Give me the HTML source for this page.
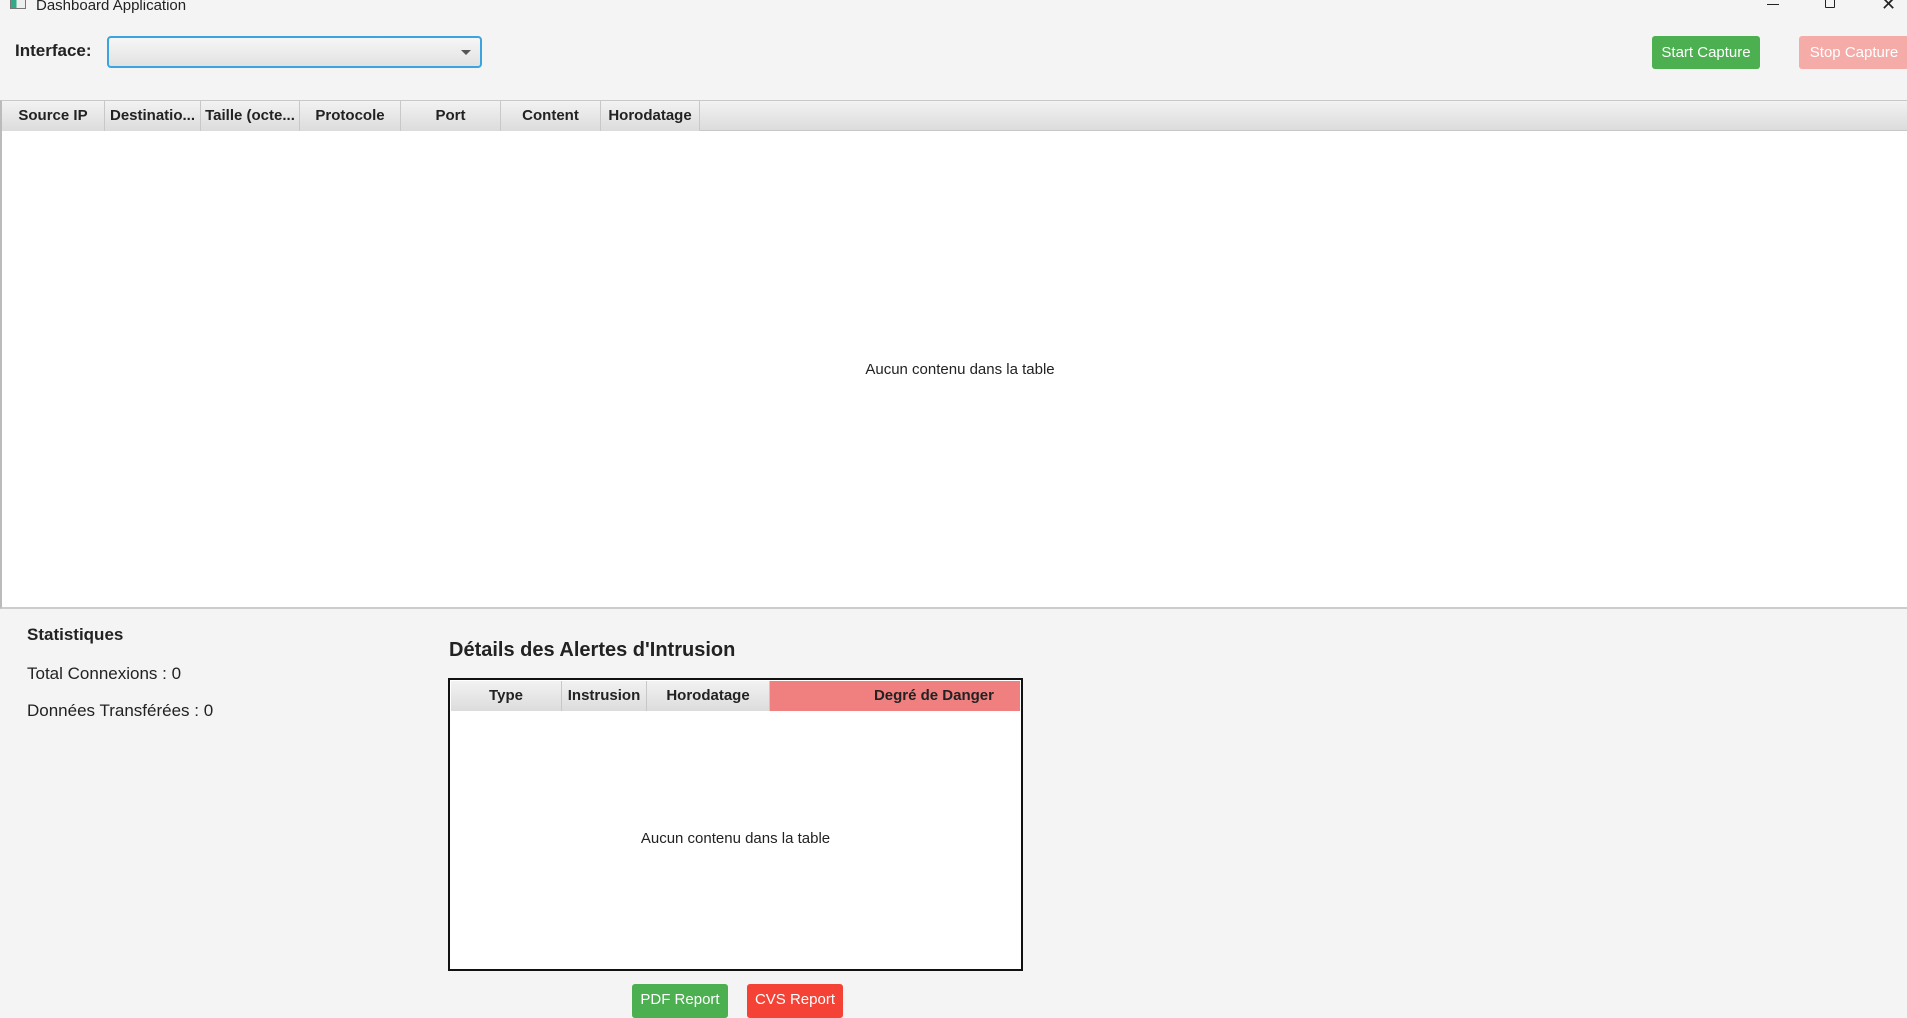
<!DOCTYPE html>
<html><head><meta charset="utf-8"><style>
*{margin:0;padding:0;box-sizing:border-box}
body{width:1907px;height:1012px;background:#f4f4f4;font-family:"Liberation Sans",sans-serif;position:relative;overflow:hidden;color:#222}
.a{position:absolute;white-space:nowrap}
.hdr{background:linear-gradient(#f2f2f2,#dcdcdc);border-right:1px solid #c8c8c8;font-weight:bold;font-size:15px;text-align:center;line-height:29px;color:#222}
.btn{color:#fff;font-size:15px;text-align:center;border-radius:3px}
</style></head><body>
<div class="a" style="left:10px;top:-4px;width:16px;height:13px;border:1px solid #777;background:linear-gradient(90deg,#3a8 40%,#eee 40%)"></div>
<div class="a" style="left:36px;top:-3px;font-size:15px;color:#222">Dashboard Application</div>
<div class="a" style="left:1767px;top:4px;width:12px;height:1px;background:#222"></div>
<div class="a" style="left:1825px;top:-4px;width:10px;height:12px;border:1px solid #222;border-radius:1px"></div>
<div class="a" style="left:1881px;top:-6px;font-size:18px;color:#222">✕</div>
<div class="a" style="left:15px;top:41px;font-size:17px;font-weight:bold">Interface:</div>
<div class="a" style="left:107px;top:36px;width:375px;height:32px;border:2px solid #3ba3e0;border-radius:4px;background:linear-gradient(#f6f6f6,#e2e2e2)"></div>
<div class="a" style="left:461px;top:50px;width:0;height:0;border-left:5px solid transparent;border-right:5px solid transparent;border-top:5px solid #555"></div>
<div class="a btn" style="left:1652px;top:36px;width:108px;height:33px;line-height:33px;background:#4caf50">Start Capture</div>
<div class="a btn" style="left:1799px;top:36px;width:110px;height:33px;line-height:33px;background:#f5aca9">Stop Capture</div>
<div class="a" style="left:0;top:100px;width:1907px;height:509px;background:#fff;border-top:1px solid #c8c8c8;border-left:2px solid #bbb;border-bottom:2px solid #ccc"></div>
<div class="a" style="left:2px;top:101px;width:1905px;height:30px;background:linear-gradient(#f2f2f2,#dcdcdc);border-bottom:1px solid #c8c8c8"></div>
<div class="a hdr" style="left:2px;top:101px;width:103px;height:30px">Source IP</div>
<div class="a hdr" style="left:105px;top:101px;width:96px;height:30px">Destinatio...</div>
<div class="a hdr" style="left:201px;top:101px;width:99px;height:30px">Taille (octe...</div>
<div class="a hdr" style="left:300px;top:101px;width:101px;height:30px">Protocole</div>
<div class="a hdr" style="left:401px;top:101px;width:100px;height:30px">Port</div>
<div class="a hdr" style="left:501px;top:101px;width:100px;height:30px">Content</div>
<div class="a hdr" style="left:601px;top:101px;width:99px;height:30px">Horodatage</div>
<div class="a" style="left:0;top:361px;width:1920px;text-align:center;font-size:15px">Aucun contenu dans la table</div>
<div class="a" style="left:27px;top:625px;font-size:17px;font-weight:bold">Statistiques</div>
<div class="a" style="left:27px;top:664px;font-size:17px">Total Connexions : 0</div>
<div class="a" style="left:27px;top:701px;font-size:17px">Données Transférées : 0</div>
<div class="a" style="left:449px;top:639px;font-size:20px;font-weight:bold">Détails des Alertes d'Intrusion</div>
<div class="a" style="left:448px;top:678px;width:575px;height:293px;border:2px solid #111;background:#fff"></div>
<div class="a hdr" style="left:451px;top:681px;width:111px;height:30px">Type</div>
<div class="a hdr" style="left:562px;top:681px;width:85px;height:30px">Instrusion</div>
<div class="a hdr" style="left:647px;top:681px;width:123px;height:30px">Horodatage</div>
<div class="a hdr" style="left:770px;top:681px;width:250px;height:30px;background:#f08080;border:none;text-align:right;padding-right:26px">Degré de Danger</div>
<div class="a" style="left:448px;top:830px;width:575px;text-align:center;font-size:15px">Aucun contenu dans la table</div>
<div class="a btn" style="left:632px;top:984px;width:96px;height:34px;line-height:32px;background:#4caf50">PDF Report</div>
<div class="a btn" style="left:747px;top:984px;width:96px;height:34px;line-height:32px;background:#f44336">CVS Report</div>
</body></html>
